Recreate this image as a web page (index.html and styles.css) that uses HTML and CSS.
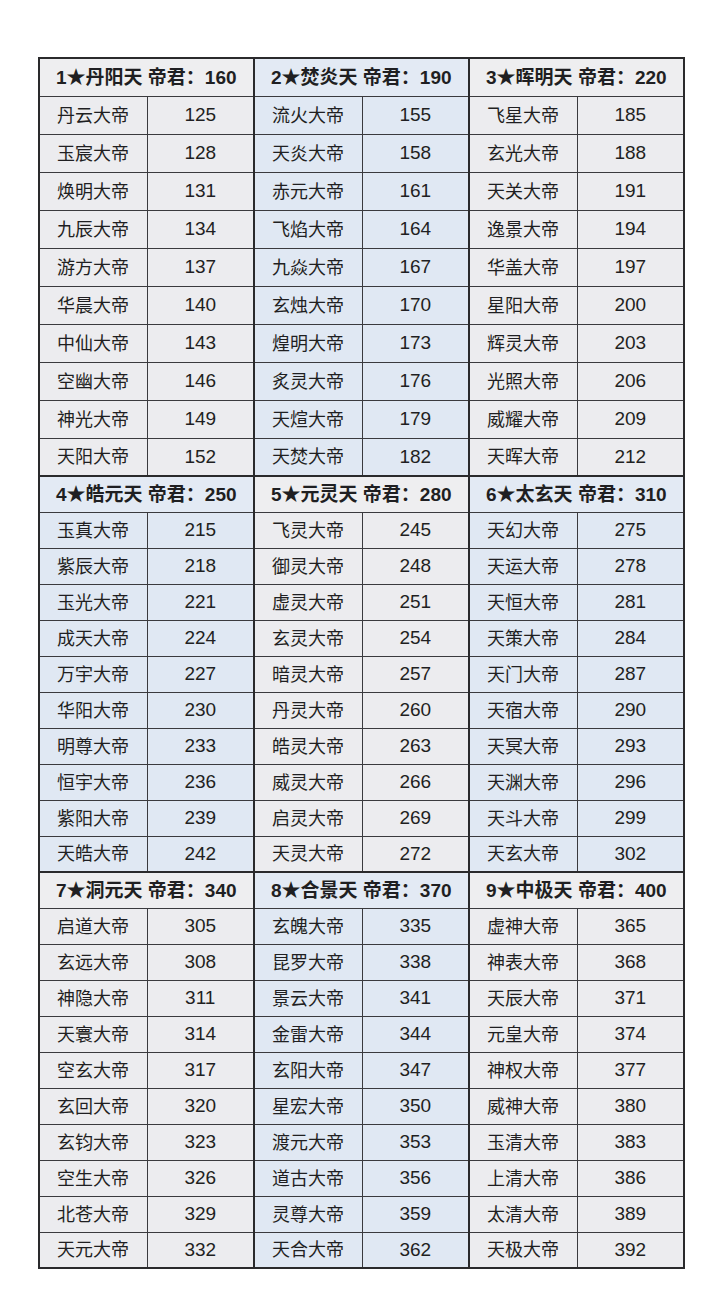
FILE: index.html
```
<!DOCTYPE html>
<html lang="zh-CN">
<head>
<meta charset="utf-8">
<title>帝君表</title>
<link rel="stylesheet" href="styles.css">
</head>
<body>
<table class="sheet">
<colgroup>
<col class="c-name"><col class="c-num"><col class="c-name"><col class="c-num"><col class="c-name c-last"><col class="c-num c-last">
</colgroup>
<tbody class="band band-1">
<tr class="head"><th colspan="2" class="g gray first">1★丹阳天 帝君：160</th><th colspan="2" class="g blue">2★焚炎天 帝君：190</th><th colspan="2" class="g gray">3★晖明天 帝君：220</th></tr>
<tr><td class="n gray first">丹云大帝</td><td class="v gray">125</td><td class="n blue">流火大帝</td><td class="v blue">155</td><td class="n gray">飞星大帝</td><td class="v gray">185</td></tr>
<tr><td class="n gray first">玉宸大帝</td><td class="v gray">128</td><td class="n blue">天炎大帝</td><td class="v blue">158</td><td class="n gray">玄光大帝</td><td class="v gray">188</td></tr>
<tr><td class="n gray first">焕明大帝</td><td class="v gray">131</td><td class="n blue">赤元大帝</td><td class="v blue">161</td><td class="n gray">天关大帝</td><td class="v gray">191</td></tr>
<tr><td class="n gray first">九辰大帝</td><td class="v gray">134</td><td class="n blue">飞焰大帝</td><td class="v blue">164</td><td class="n gray">逸景大帝</td><td class="v gray">194</td></tr>
<tr><td class="n gray first">游方大帝</td><td class="v gray">137</td><td class="n blue">九焱大帝</td><td class="v blue">167</td><td class="n gray">华盖大帝</td><td class="v gray">197</td></tr>
<tr><td class="n gray first">华晨大帝</td><td class="v gray">140</td><td class="n blue">玄烛大帝</td><td class="v blue">170</td><td class="n gray">星阳大帝</td><td class="v gray">200</td></tr>
<tr><td class="n gray first">中仙大帝</td><td class="v gray">143</td><td class="n blue">煌明大帝</td><td class="v blue">173</td><td class="n gray">辉灵大帝</td><td class="v gray">203</td></tr>
<tr><td class="n gray first">空幽大帝</td><td class="v gray">146</td><td class="n blue">炙灵大帝</td><td class="v blue">176</td><td class="n gray">光照大帝</td><td class="v gray">206</td></tr>
<tr><td class="n gray first">神光大帝</td><td class="v gray">149</td><td class="n blue">天煊大帝</td><td class="v blue">179</td><td class="n gray">威耀大帝</td><td class="v gray">209</td></tr>
<tr><td class="n gray first">天阳大帝</td><td class="v gray">152</td><td class="n blue">天焚大帝</td><td class="v blue">182</td><td class="n gray">天晖大帝</td><td class="v gray">212</td></tr>
</tbody>
<tbody class="band band-2">
<tr class="head"><th colspan="2" class="g blue first">4★皓元天 帝君：250</th><th colspan="2" class="g gray">5★元灵天 帝君：280</th><th colspan="2" class="g blue">6★太玄天 帝君：310</th></tr>
<tr><td class="n blue first">玉真大帝</td><td class="v blue">215</td><td class="n gray">飞灵大帝</td><td class="v gray">245</td><td class="n blue">天幻大帝</td><td class="v blue">275</td></tr>
<tr><td class="n blue first">紫辰大帝</td><td class="v blue">218</td><td class="n gray">御灵大帝</td><td class="v gray">248</td><td class="n blue">天运大帝</td><td class="v blue">278</td></tr>
<tr><td class="n blue first">玉光大帝</td><td class="v blue">221</td><td class="n gray">虚灵大帝</td><td class="v gray">251</td><td class="n blue">天恒大帝</td><td class="v blue">281</td></tr>
<tr><td class="n blue first">成天大帝</td><td class="v blue">224</td><td class="n gray">玄灵大帝</td><td class="v gray">254</td><td class="n blue">天策大帝</td><td class="v blue">284</td></tr>
<tr><td class="n blue first">万宇大帝</td><td class="v blue">227</td><td class="n gray">暗灵大帝</td><td class="v gray">257</td><td class="n blue">天门大帝</td><td class="v blue">287</td></tr>
<tr><td class="n blue first">华阳大帝</td><td class="v blue">230</td><td class="n gray">丹灵大帝</td><td class="v gray">260</td><td class="n blue">天宿大帝</td><td class="v blue">290</td></tr>
<tr><td class="n blue first">明尊大帝</td><td class="v blue">233</td><td class="n gray">皓灵大帝</td><td class="v gray">263</td><td class="n blue">天冥大帝</td><td class="v blue">293</td></tr>
<tr><td class="n blue first">恒宇大帝</td><td class="v blue">236</td><td class="n gray">威灵大帝</td><td class="v gray">266</td><td class="n blue">天渊大帝</td><td class="v blue">296</td></tr>
<tr><td class="n blue first">紫阳大帝</td><td class="v blue">239</td><td class="n gray">启灵大帝</td><td class="v gray">269</td><td class="n blue">天斗大帝</td><td class="v blue">299</td></tr>
<tr><td class="n blue first">天皓大帝</td><td class="v blue">242</td><td class="n gray">天灵大帝</td><td class="v gray">272</td><td class="n blue">天玄大帝</td><td class="v blue">302</td></tr>
</tbody>
<tbody class="band band-3">
<tr class="head"><th colspan="2" class="g gray first">7★洞元天 帝君：340</th><th colspan="2" class="g blue">8★合景天 帝君：370</th><th colspan="2" class="g gray">9★中极天 帝君：400</th></tr>
<tr><td class="n gray first">启道大帝</td><td class="v gray">305</td><td class="n blue">玄魄大帝</td><td class="v blue">335</td><td class="n gray">虚神大帝</td><td class="v gray">365</td></tr>
<tr><td class="n gray first">玄远大帝</td><td class="v gray">308</td><td class="n blue">昆罗大帝</td><td class="v blue">338</td><td class="n gray">神表大帝</td><td class="v gray">368</td></tr>
<tr><td class="n gray first">神隐大帝</td><td class="v gray">311</td><td class="n blue">景云大帝</td><td class="v blue">341</td><td class="n gray">天辰大帝</td><td class="v gray">371</td></tr>
<tr><td class="n gray first">天寰大帝</td><td class="v gray">314</td><td class="n blue">金雷大帝</td><td class="v blue">344</td><td class="n gray">元皇大帝</td><td class="v gray">374</td></tr>
<tr><td class="n gray first">空玄大帝</td><td class="v gray">317</td><td class="n blue">玄阳大帝</td><td class="v blue">347</td><td class="n gray">神权大帝</td><td class="v gray">377</td></tr>
<tr><td class="n gray first">玄回大帝</td><td class="v gray">320</td><td class="n blue">星宏大帝</td><td class="v blue">350</td><td class="n gray">威神大帝</td><td class="v gray">380</td></tr>
<tr><td class="n gray first">玄钧大帝</td><td class="v gray">323</td><td class="n blue">渡元大帝</td><td class="v blue">353</td><td class="n gray">玉清大帝</td><td class="v gray">383</td></tr>
<tr><td class="n gray first">空生大帝</td><td class="v gray">326</td><td class="n blue">道古大帝</td><td class="v blue">356</td><td class="n gray">上清大帝</td><td class="v gray">386</td></tr>
<tr><td class="n gray first">北苍大帝</td><td class="v gray">329</td><td class="n blue">灵尊大帝</td><td class="v blue">359</td><td class="n gray">太清大帝</td><td class="v gray">389</td></tr>
<tr><td class="n gray first">天元大帝</td><td class="v gray">332</td><td class="n blue">天合大帝</td><td class="v blue">362</td><td class="n gray">天极大帝</td><td class="v gray">392</td></tr>
</tbody>
</table>
</body>
</html>
```
FILE: styles.css
```
html, body {
  margin: 0;
  padding: 0;
  background: #ffffff;
}

body {
  font-family: "Liberation Sans", "Noto Sans CJK SC", sans-serif;
  color: #1f1f22;
}

.sheet {
  margin: 57px 0 0 38px;
  width: 644px;
  border-collapse: collapse;
  table-layout: fixed;
  border: 2px solid #2a2a2c;
}

.c-name { width: 108px; }
.c-num { width: 107px; }

.sheet th,
.sheet td {
  border: 1px solid #3a3a3e;
  padding: 0;
  white-space: nowrap;
  overflow: hidden;
}

.sheet th.first,
.sheet td.first { border-left: 2px solid #2a2a2c; }

.sheet th.g {
  text-align: left;
  padding-left: 16px;
  padding-bottom: 3px;
  font-size: 19px;
  font-weight: bold;
  border-left: 2px solid #2a2a2c;
}

.sheet td.n {
  text-align: left;
  padding-left: 17px;
  padding-bottom: 3px;
  font-size: 18px;
}

.sheet td.n.gray:not(.first),
.sheet td.n.blue:not(.first) { border-left: 2px solid #2a2a2c; }

.sheet td.v {
  text-align: center;
  font-size: 19px;
}

.head th { border-top: 2px solid #2a2a2c; }

.band-1 tr { height: 38px; }
.band-2 tr { height: 36px; }
.band-3 tr { height: 36px; }

.gray { background: #ececef; }
.blue { background: #e0e8f3; }
.head .gray { background: #eeeef0; }
.head .blue { background: #e3eaf4; }
```
